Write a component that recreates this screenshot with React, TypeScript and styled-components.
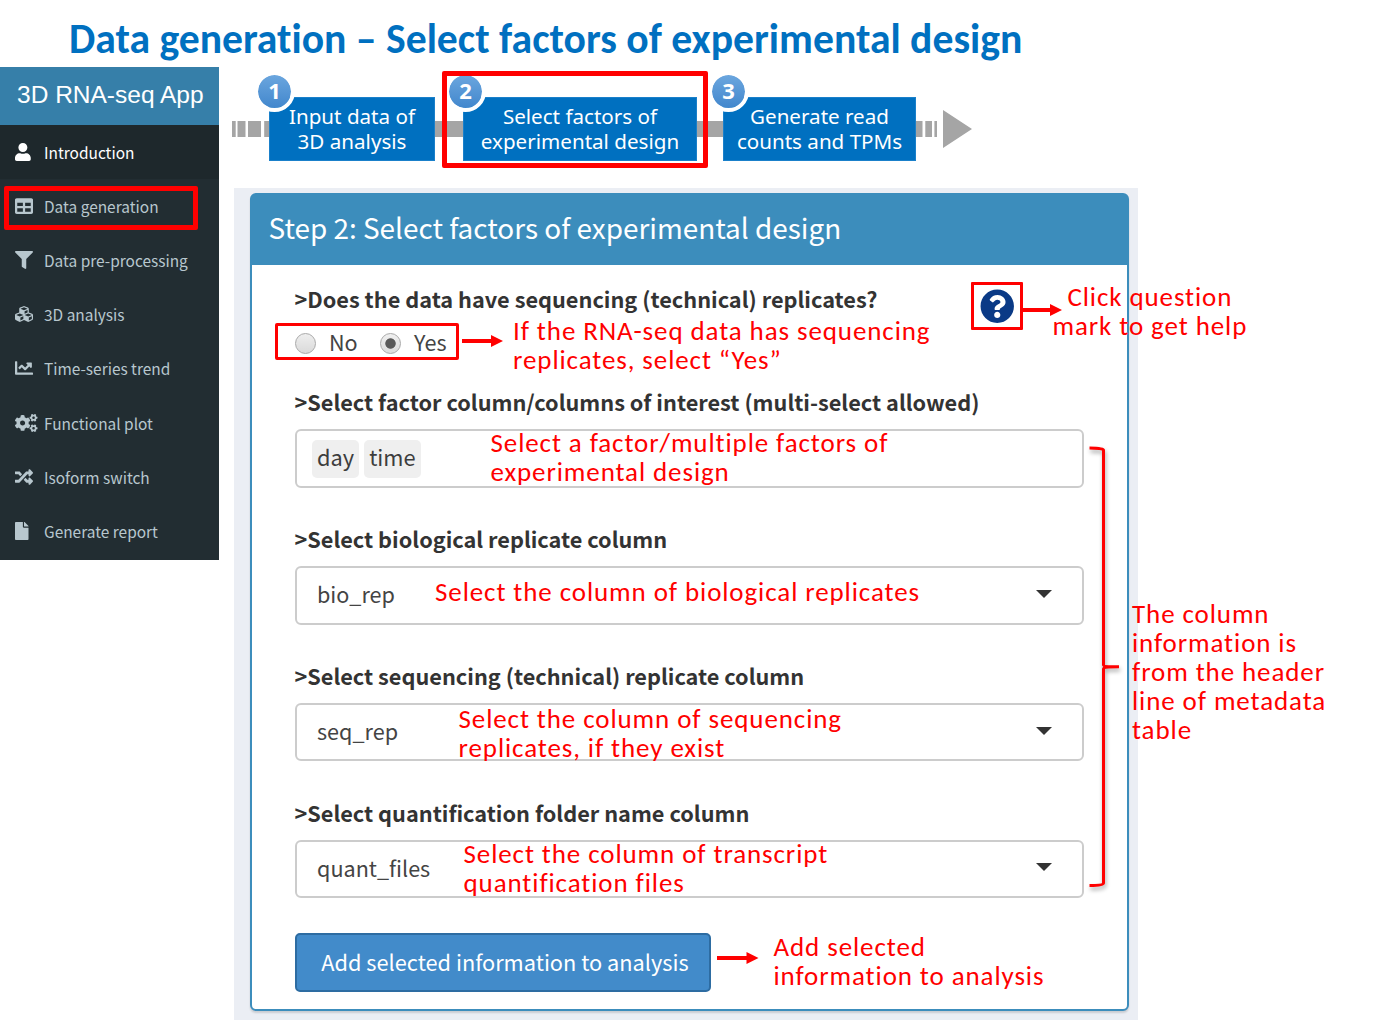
import React from 'react';
import styled, { createGlobalStyle, css } from 'styled-components';
import {
  FaUser,
  FaTable,
  FaFilter,
  FaCubes,
  FaChartLine,
  FaCogs,
  FaRandom,
  FaFile,
  FaQuestionCircle,
} from 'react-icons/fa';

const GlobalStyle = createGlobalStyle`
  *, *::before, *::after { box-sizing: border-box; }
  body { margin: 0; background: #fff; }
`;

const calibri = `Carlito, Calibri, Lato, sans-serif`;
const source = `"Noto Sans CJK SC", "Noto Sans", sans-serif`;
const segoe = `"Noto Sans", "Open Sans", sans-serif`;
const red = '#ff0000';

const Slide = styled.div`
  position: relative;
  width: 1374px;
  height: 1020px;
  overflow: hidden;
  display: flex;
  flex-direction: column;
  background: #fff;
`;

const SlideTitle = styled.h1`
  margin: 0;
  height: 67px;
  padding: 16px 0 0 69px;
  font: bold 41.65px/46px ${calibri};
  font-variant-ligatures: none;
  color: #0070c0;
  white-space: nowrap;
`;

const Columns = styled.div`
  display: flex;
  align-items: flex-start;
  flex: 1;
`;

/* Sidebar */

const Sidebar = styled.nav`
  width: 219px;
  height: 493px;
  display: flex;
  flex-direction: column;
  background: #222d32;
`;

const Brand = styled.div`
  height: 58px;
  padding-left: 17px;
  background: #367fa9;
  color: #fff;
  font: 24.5px/55px 'Liberation Sans', Arial, sans-serif;
  white-space: nowrap;
`;

const MenuItem = styled.a<{ $iconWidth: number; $active?: boolean }>`
  position: relative;
  height: 54.2px;
  display: grid;
  grid-template-columns: 29px 1fr;
  align-items: center;
  padding: 0 0 1px 15px;
  font: 15.45px/20px ${source};
  color: ${(p) => (p.$active ? '#fff' : '#b8c7ce')};
  background: ${(p) => (p.$active ? '#1e282c' : 'transparent')};
  white-space: nowrap;

  svg {
    height: 18px;
    width: ${(p) => p.$iconWidth}px;
  }
`;

const Frame = styled.span<{ $inset: string; $weight: number }>`
  position: absolute;
  inset: ${(p) => p.$inset};
  border: ${(p) => p.$weight}px solid ${red};
  border-radius: 2px;
  pointer-events: none;
`;

/* Step flow */

const Main = styled.main`
  flex: 1;
  display: flex;
  flex-direction: column;
`;

const Flow = styled.div`
  height: 121px;
  padding: 30px 0 0 13px;
  display: flex;
  align-items: flex-start;
`;

const Rail = styled.div<{ $width: number }>`
  width: ${(p) => p.$width}px;
  height: 16px;
  margin-top: 24px;
  background: #a5a5a5;
`;

const DashRail = styled.svg`
  display: block;
  height: 64px;
  fill: #a5a5a5;
`;

const StepBox = styled.div<{ $width: number }>`
  position: relative;
  width: ${(p) => p.$width}px;
  height: 64px;
  padding-top: 6px;
  background: #0070c0;
  border: 1px solid #1a80ca;
  color: #fff;
  text-align: center;
  font: 20.6px/25px ${segoe};
  white-space: pre;
`;

const StepNumber = styled.span<{ $left?: number }>`
  position: absolute;
  left: ${(p) => p.$left ?? -16}px;
  top: -27px;
  width: 41px;
  height: 41px;
  border: 4px solid #fff;
  border-radius: 50%;
  background: linear-gradient(#6ba6de, #4287cd) padding-box;
  font: bold 22px/31px ${segoe};
`;

/* Form panel */

const Backdrop = styled.section`
  width: 904px;
  height: 832px;
  margin-left: 15px;
  padding: 5px 9px 0 16px;
  background: #ebeef4;
`;

const Card = styled.div`
  position: relative;
  height: 818px;
  border: 2px solid #3c8dbc;
  border-radius: 6px;
  background: #fff;
  box-shadow: 0 2px 2px rgba(0, 0, 0, 0.14);
`;

const CardHeader = styled.h2`
  margin: 0;
  height: 70px;
  padding: 0 0 0 16.5px;
  background: #3c8dbc;
  color: #fff;
  font: normal 27.92px/65px ${source};
`;

const CardBody = styled.form`
  padding: 18px 43px 0;
  color: #333;
  font: 21.6px/30px ${source};
`;

const Label = styled.label`
  display: block;
  height: 30px;
  margin-left: -0.6px;
  font-weight: bold;
  font-size: 21.72px;
  line-height: 31.5px;
  white-space: nowrap;
`;

const RadioField = styled.div`
  height: 103.3px;
`;

const RadioRow = styled.div`
  position: relative;
  display: flex;
  width: 170px;
  height: 21px;
  margin-top: 20px;
`;

const Choice = styled.span`
  width: 85px;
  display: flex;
  gap: 13px;
  line-height: 18px;
  color: #444;
`;

const Dot = styled.i<{ $on?: boolean }>`
  width: 21px;
  height: 21px;
  border: 1.5px solid #a9a9a9;
  border-radius: 50%;
  background: ${(p) =>
    p.$on
      ? 'radial-gradient(circle, #5a5a5a 0 4.8px, transparent 5.6px), linear-gradient(#f0f0f0, #dcdcdc)'
      : 'linear-gradient(#eee, #dadada)'};
`;

const HelpButton = styled.span`
  position: absolute;
  left: 719px;
  top: 87px;
  width: 52px;
  height: 48px;
  display: flex;
  justify-content: center;
  padding-top: 4px;
  border: 3px solid ${red};
  border-radius: 1px;
  color: #0a3a86;
  font-size: 34.5px;
`;

const Field = styled.div`
  height: 136.8px;
`;

const Control = styled.div<{ $tags?: boolean }>`
  height: 58.5px;
  margin-top: 13px;
  display: flex;
  align-items: center;
  gap: 5px;
  padding: 0 30.5px 0 20px;
  border: 2px solid #ccc;
  border-radius: 6px;
  ${(p) =>
    p.$tags &&
    css`
      padding-left: 15px;
    `}
`;

const Value = styled.span`
  flex: 1;
  padding-bottom: 2px;
  color: #444;
`;

const Tag = styled.span`
  height: 38px;
  padding: 0 5px;
  border-radius: 5px;
  background: #efefef;
  color: #3d3d3d;
  font-size: 21.8px;
  line-height: 34px;
`;

const Caret = styled.i`
  border: 8.5px solid transparent;
  border-top-color: #333;
  border-bottom: 0;
  margin-bottom: 3px;
`;

const Submit = styled.button`
  display: block;
  width: 416px;
  height: 58.5px;
  padding: 0 0 2px 4px;
  border: 2px solid #2d6ca2;
  border-radius: 5px;
  background: #428bca;
  color: #fff;
  font: 21.75px/30px ${source};
`;

/* Annotations laid over the screenshot */

const Note = styled.p<{ $x: number; $y: number; $center?: boolean }>`
  position: absolute;
  left: ${(p) => p.$x}px;
  top: ${(p) => p.$y}px;
  margin: 0;
  color: ${red};
  font: 27px/29.1px ${calibri};
  letter-spacing: 0.9px;
  font-variant-ligatures: none;
  text-align: ${(p) => (p.$center ? 'center' : 'left')};
  white-space: pre;
`;

const ArrowSvg = styled.svg<{ $x: number; $y: number }>`
  position: absolute;
  left: ${(p) => p.$x}px;
  top: ${(p) => p.$y}px;
  fill: ${red};
`;

const BraceSvg = styled.svg`
  position: absolute;
  left: 1084px;
  top: 440px;
  fill: none;
  stroke: ${red};
  stroke-width: 3;
  filter: drop-shadow(1px 3px 2px rgba(0, 0, 0, 0.35));
`;

function Arrow({ x, y, length }: { x: number; y: number; length: number }) {
  return (
    <ArrowSvg $x={x} $y={y} width={length} height={12}>
      <rect x={0} y={4} width={length - 11} height={4} />
      <path d={`M${length - 12} 0L${length} 6L${length - 12} 12Z`} />
    </ArrowSvg>
  );
}

const menu = [
  { icon: FaUser, width: 15.75, text: 'Introduction' },
  { icon: FaTable, width: 18, text: 'Data generation' },
  { icon: FaFilter, width: 18, text: 'Data pre-processing' },
  { icon: FaCubes, width: 18, text: '3D analysis' },
  { icon: FaChartLine, width: 18, text: 'Time-series trend' },
  { icon: FaCogs, width: 22.5, text: 'Functional plot' },
  { icon: FaRandom, width: 18, text: 'Isoform switch' },
  { icon: FaFile, width: 13.5, text: 'Generate report' },
];

const selects = [
  { label: '>Select biological replicate column', value: 'bio_rep' },
  { label: '>Select sequencing (technical) replicate column', value: 'seq_rep' },
  { label: '>Select quantification folder name column', value: 'quant_files' },
];

const notes = [
  { x: 513, y: 315.5, text: 'If the RNA-seq data has sequencing\nreplicates, select “Yes”' },
  { x: 1052.5, y: 281.5, text: 'Click question\nmark to get help', center: true },
  { x: 490.5, y: 427.5, text: 'Select a factor/multiple factors of\nexperimental design' },
  { x: 435, y: 576.5, text: 'Select the column of biological replicates' },
  { x: 458.5, y: 703.5, text: 'Select the column of sequencing\nreplicates, if they exist' },
  { x: 463.5, y: 838.5, text: 'Select the column of transcript\nquantification files' },
  { x: 1132, y: 598.5, text: 'The column\ninformation is\nfrom the header\nline of metadata\ntable' },
  { x: 773.5, y: 931.5, text: 'Add selected\ninformation to analysis' },
];

export default function App() {
  return (
    <>
      <GlobalStyle />
      <Slide>
        <SlideTitle>Data generation – Select factors of experimental design</SlideTitle>
        <Columns>
          <Sidebar>
            <Brand>3D RNA-seq App</Brand>
            {menu.map(({ icon: Icon, width, text }, i) => (
              <MenuItem key={text} $iconWidth={width} $active={i === 0}>
                <Icon />
                {text}
                {i === 1 && <Frame $inset="7px 21px 3px 4px" $weight={5} />}
              </MenuItem>
            ))}
          </Sidebar>
          <Main>
            <Flow>
              <DashRail width={37} viewBox="0 0 37 64">
                <path d="M0 24h3.7v16H0zM5.5 24h8v16h-8zM16 24h13v16H16zM32.2 24H37v16h-4.8z" />
              </DashRail>
              <StepBox $width={166}>
                {'Input data of\n3D analysis'}
                <StepNumber>1</StepNumber>
              </StepBox>
              <Rail $width={28} />
              <StepBox $width={234}>
                {'Select factors of\nexperimental design'}
                <StepNumber $left={-19}>2</StepNumber>
                <Frame $inset="-27px -12px -8px -22px" $weight={5} />
              </StepBox>
              <Rail $width={26} />
              <StepBox $width={193}>
                {'Generate read\ncounts and TPMs'}
                <StepNumber>3</StepNumber>
              </StepBox>
              <DashRail width={56} viewBox="0 0 56 64">
                <path d="M0 24h6.5v16H0zM9.3 24H16v16H9.3zM18.4 24H21v16h-2.6zM27 13L56 32L27 51Z" />
              </DashRail>
            </Flow>
            <Backdrop>
              <Card>
                <CardHeader>Step 2: Select factors of experimental design</CardHeader>
                <CardBody>
                  <RadioField>
                    <Label>&gt;Does the data have sequencing (technical) replicates?</Label>
                    <RadioRow>
                      <Choice>
                        <Dot />
                        No
                      </Choice>
                      <Choice>
                        <Dot $on />
                        Yes
                      </Choice>
                      <Frame $inset="-10px 6px -6px -20px" $weight={3} />
                    </RadioRow>
                  </RadioField>
                  <Field>
                    <Label>&gt;Select factor column/columns of interest (multi-select allowed)</Label>
                    <Control $tags>
                      <Tag>day</Tag>
                      <Tag>time</Tag>
                    </Control>
                  </Field>
                  {selects.map((s) => (
                    <Field key={s.value}>
                      <Label>{s.label}</Label>
                      <Control>
                        <Value>{s.value}</Value>
                        <Caret />
                      </Control>
                    </Field>
                  ))}
                  <Submit type="button">Add selected information to analysis</Submit>
                </CardBody>
                <HelpButton>
                  <FaQuestionCircle />
                </HelpButton>
              </Card>
            </Backdrop>
          </Main>
        </Columns>
        <Arrow x={462} y={335} length={41} />
        <Arrow x={1022} y={304} length={40} />
        <Arrow x={717} y={952} length={41.5} />
        <BraceSvg width={44} height={460}>
          <path d="M5.5 8C13 8 19.5 8.5 19.5 10V225C19.5 226.5 26 226.7 35 226.7C26 226.7 19.5 227 19.5 229V443C19.5 445 13 445.5 5.5 445.5" />
        </BraceSvg>
        {notes.map((n) => (
          <Note key={n.text} $x={n.x} $y={n.y} $center={n.center}>
            {n.text}
          </Note>
        ))}
      </Slide>
    </>
  );
}
